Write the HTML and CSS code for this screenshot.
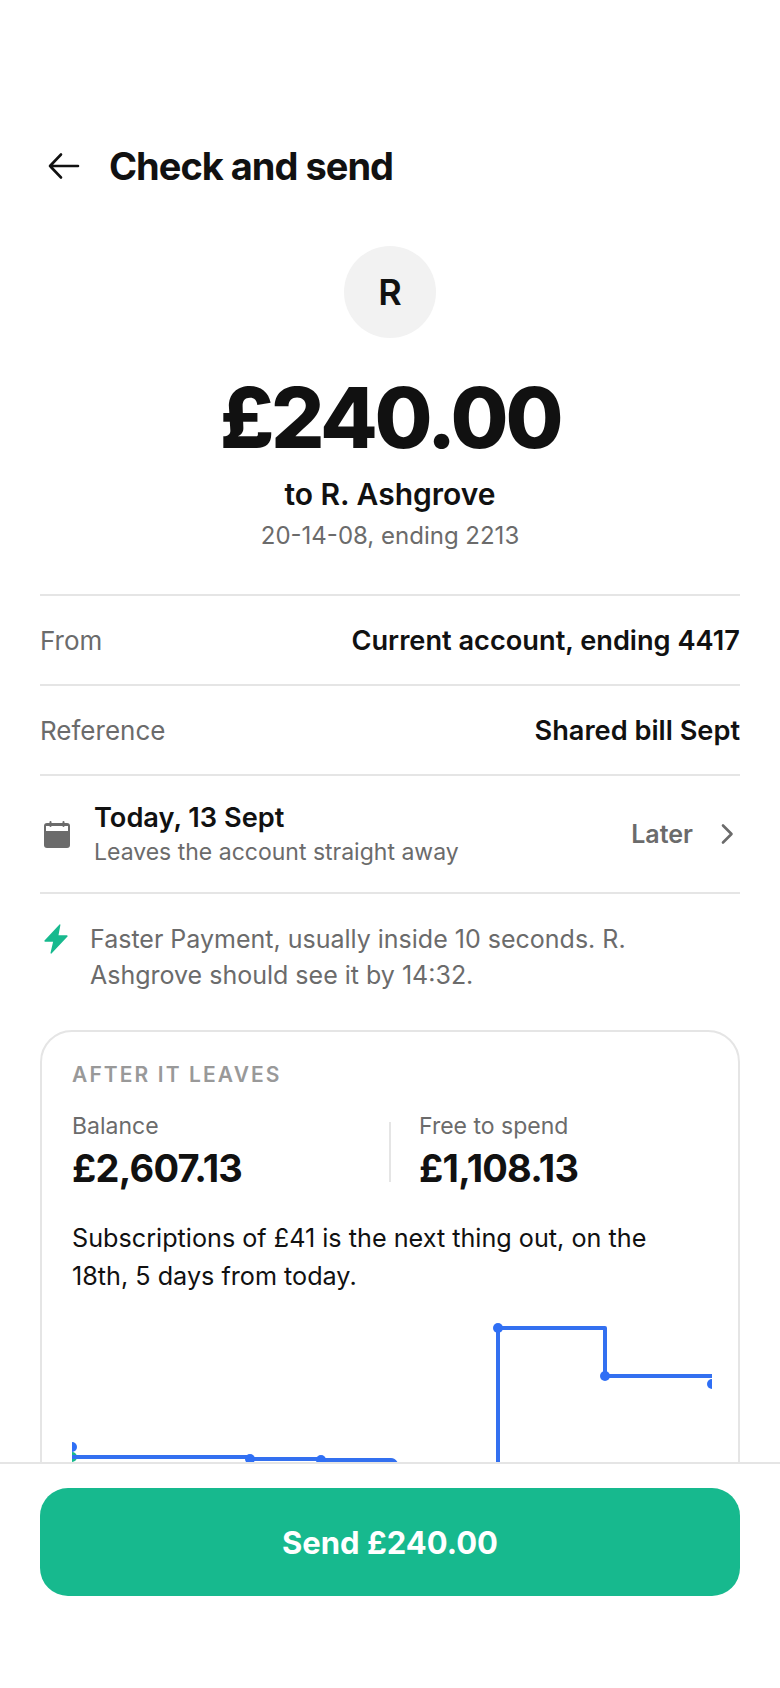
FILE: index.html
```html
<!DOCTYPE html>
<html lang="en">
<head>
<meta charset="utf-8">
<title>Check and send</title>
<link rel="stylesheet" href="styles.css">
</head>
<body>
<div class="app">
  <main class="content">
    <header class="topbar">
      <svg class="back" width="32" height="32" viewBox="0 0 32 32" fill="none" stroke="#111" stroke-width="2.6" stroke-linecap="round" stroke-linejoin="round"><path d="M30 16H2M13 4.500L2 16l11 11.500"/></svg>
      <h1 class="title">Check and send</h1>
    </header>
    <section class="hero">
      <div class="avatar">R</div>
      <div class="amount">£240.00</div>
      <div class="payee">to R. Ashgrove</div>
      <div class="sort">20-14-08, ending 2213</div>
    </section>
    <div class="row"><span class="label">From</span><span class="value">Current account, ending 4417</span></div>
    <div class="row"><span class="label">Reference</span><span class="value">Shared bill Sept</span></div>
    <div class="row when">
      <svg class="cal" width="28" height="28" viewBox="0 0 28 28"><rect x="1" y="3" width="26" height="25" rx="3" fill="#6b6b6b"/><rect x="3" y="6" width="22" height="5" fill="#fff"/><rect x="6.500" y="1" width="2" height="6" rx="1" fill="#6b6b6b"/><rect x="19.500" y="1" width="2" height="6" rx="1" fill="#6b6b6b"/></svg>
      <div class="when-text">
        <div class="when-main">Today, 13 Sept</div>
        <div class="when-sub">Leaves the account straight away</div>
      </div>
      <span class="later">Later</span>
      <svg class="chev" width="14" height="22" viewBox="0 0 14 22" fill="none" stroke="#6b6b6b" stroke-width="2.600" stroke-linecap="round" stroke-linejoin="round"><path d="M2 2.500l8.500 8.500-8.500 8.500"/></svg>
    </div>
    <div class="note">
      <svg class="bolt" width="26" height="32" viewBox="0 0 26 32"><path d="M16.500 1.500 1.500 17.500a.8.8 0 0 0 .6 1.300h8L7.500 30a.6.6 0 0 0 1 .5L24.500 13.500a.8.8 0 0 0-.6-1.300h-8.400l1.900-10.300c.1-.6-.4-.8-.9-.4z" fill="#17b98e"/></svg>
      <p class="note-text">Faster Payment, usually inside 10 seconds. R. Ashgrove should see it by 14:32.</p>
    </div>
    <section class="card">
      <div class="eyebrow">AFTER IT LEAVES</div>
      <div class="stats">
        <div class="stat"><div class="stat-label">Balance</div><div class="stat-value">£2,607.13</div></div>
        <div class="stat-rule"></div>
        <div class="stat stat-second"><div class="stat-label">Free to spend</div><div class="stat-value">£1,108.13</div></div>
      </div>
      <p class="next">Subscriptions of £41 is the next thing out, on the 18th, 5 days from today.</p>
      <svg class="chart" width="640" height="240" viewBox="0 0 640 240">
        <circle cx="0" cy="152" r="5" fill="#2f6ff5"/>
        <circle cx="0" cy="162" r="5" fill="#17b98e"/>
        <path d="M0 162H178V164H249V165H319Q323 165 325 171V240M426 240V33H533V81H640" fill="none" stroke="#3370f0" stroke-width="4" stroke-linejoin="round"/>
        <circle cx="178" cy="164" r="5" fill="#2f6ff5"/>
        <circle cx="249" cy="165" r="5" fill="#2f6ff5"/>
        <circle cx="426" cy="33" r="5" fill="#2f6ff5"/>
        <circle cx="533" cy="81" r="5" fill="#2f6ff5"/>
        <circle cx="640" cy="89" r="5" fill="#2f6ff5"/>
      </svg>
    </section>
  </main>
  <footer class="footer"><button class="send" type="button">Send £240.00</button></footer>
</div>
</body>
</html>
```
FILE: styles.css
```css
* { box-sizing: border-box; }
html, body { margin: 0; height: 100%; }
body { font-family: Inter, "Liberation Sans", sans-serif; color: #111; background: #fff; }
.app { height: 1688px; display: flex; flex-direction: column; }
.content { flex: 1; min-height: 0; overflow: hidden; padding: 136px 40px 0; }
.topbar { display: flex; align-items: center; gap: 29px; height: 60px; margin-bottom: 20px; }
.back { margin-left: 8px; flex: none; width: 32px; height: 32px; }
.title { margin: 0; font-size: 38px; font-weight: 700; letter-spacing: -1px; line-height: 60px; }
.hero { display: flex; flex-direction: column; align-items: center; padding: 30px 0 40px; border-bottom: 2px solid #e5e5e5; }
.avatar { width: 92px; height: 92px; border-radius: 50%; background: #f2f2f2; display: flex; align-items: center; justify-content: center; font-size: 36px; font-weight: 600; }
.amount { margin-top: 32px; font-size: 84px; font-weight: 800; letter-spacing: -3.25px; line-height: 96px; }
.payee { margin-top: 8px; font-size: 30px; font-weight: 600; line-height: 40px; }
.sort { margin-top: 4px; font-size: 24px; color: #6b6b6b; line-height: 36px; }
.row { display: flex; align-items: center; justify-content: space-between; height: 90px; border-bottom: 2px solid #e5e5e5; font-size: 27.2px; }
.label { font-size: 26px; color: #6b6b6b; }
.value { font-weight: 600; }
.when { height: 118px; justify-content: flex-start; }
.cal { flex: none; margin-left: 3px; }
.when-text { flex: 1; margin-left: 23px; }
.when-main { font-size: 27.2px; font-weight: 600; line-height: 36px; }
.when-sub { font-size: 23px; color: #6b6b6b; line-height: 32px; }
.later { font-size: 25px; font-weight: 600; color: #6b6b6b; margin-right: 28px; }
.chev { flex: none; margin-right: 5px; }
.note { display: flex; gap: 21px; padding-top: 27px; margin-bottom: 37px; }
.bolt { flex: none; margin-left: 3px; margin-top: 2px; }
.note-text { margin: 0; font-size: 25px; line-height: 36px; color: #6b6b6b; }
.card { border: 2px solid #e5e5e5; border-radius: 32px; padding: 29px 30px 0; height: 600px; }
.eyebrow { font-size: 21px; font-weight: 600; letter-spacing: 2.100px; color: #999; line-height: 28px; }
.stats { display: grid; grid-template-columns: 1fr auto 1fr; margin-top: 21px; }
.stat-rule { width: 2px; height: 60px; align-self: center; background: #e5e5e5; }
.stat-second { padding-left: 28px; }
.stat-label { font-size: 23px; color: #6b6b6b; line-height: 32px; }
.stat-value { font-size: 38px; font-weight: 700; letter-spacing: -0.76px; line-height: 52px; }
.next { margin: 25px 0 0; font-size: 25.200px; line-height: 38px; }
.chart { display: block; overflow: hidden; }
.footer { flex: none; height: 226px; border-top: 2px solid #e5e5e5; padding: 24px 40px 0; }
.send { width: 100%; height: 108px; border: 0; border-radius: 28px; background: #17b98e; color: #fff; font: 700 31px Inter, "Liberation Sans", sans-serif; }
```
